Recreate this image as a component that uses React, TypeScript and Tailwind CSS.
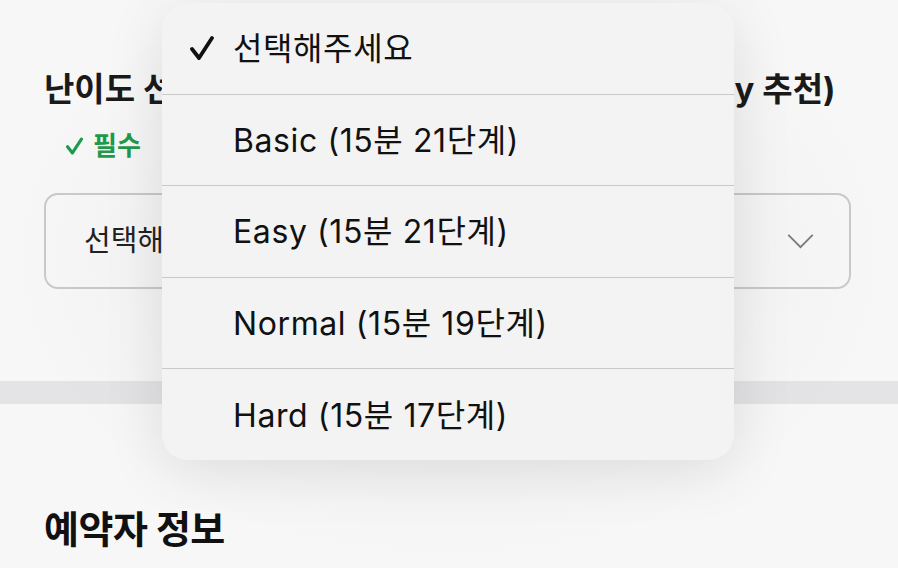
const options = [
  "선택해주세요",
  "Basic (15분 21단계)",
  "Easy (15분 21단계)",
  "Normal (15분 19단계)",
  "Hard (15분 17단계)",
];

function CheckMark({ className, weight = 3.6 }: { className?: string; weight?: number }) {
  return (
    <svg viewBox="0 0 24 26" className={className} fill="none">
      <polyline
        points="2,14 9,23 22,3"
        stroke="currentColor"
        strokeWidth={weight}
        strokeLinecap="round"
        strokeLinejoin="round"
      />
    </svg>
  );
}

export default function App() {
  return (
    <div
      className="relative h-[568px] w-[898px] overflow-hidden bg-[#f7f7f7] text-[#111]"
      style={{ fontFamily: "Inter, 'Noto Sans CJK KR', sans-serif" }}
    >
      <div className="flex flex-col pt-[69px]">
        <div className="pl-[44px] pr-[47px]">
          <h2 className="whitespace-nowrap text-[33px] font-bold leading-[40px] tracking-[0px] text-[#1a1a1a]">
            난이도 선택 (방탈출이 처음이라면 Basic 또는 Easy 추천)
          </h2>
          <div className="mt-[22px] flex items-center gap-[9px] pl-[21px] text-[26px] font-bold leading-[30px] text-[#1f9a4b]">
            <CheckMark className="h-[18px] w-[19px]" weight={4.5} />
            <span>필수</span>
          </div>
          <div className="mt-[32px] flex h-[96px] items-center justify-between rounded-[14px] border-2 border-[#cacaca] pl-[38px] pr-[35px]">
            <span className="text-[29px] text-[#222]">선택해주세요</span>
            <svg viewBox="0 0 28 16" className="h-[15px] w-[27px]" fill="none">
              <polyline points="1,1 14,14 27,1" stroke="#7b7b7b" strokeWidth="2" />
            </svg>
          </div>
        </div>
        <div className="mt-[92px] h-[23px] bg-[#e4e4e7]" />
        <div className="mt-[103px] px-[44px]">
          <h2 className="text-[38px] font-bold leading-[44px] tracking-[-0.5px] text-[#111]">예약자 정보</h2>
        </div>
      </div>

      <div className="pointer-events-none absolute inset-0 bg-[radial-gradient(ellipse_at_50%_45%,rgba(0,0,0,0.05),rgba(0,0,0,0)_70%)]" />

      <div className="absolute left-[162px] top-[3px] flex h-[457px] w-[572px] flex-col overflow-hidden rounded-[26px] bg-[#f3f3f3] shadow-[0_10px_60px_rgba(0,0,0,0.10)]">
        {options.map((label, i) => (
          <div
            key={label}
            className={`relative flex flex-1 items-center pl-[71px] pt-[2px] text-[32px] leading-none tracking-[0.6px] text-[#111] ${
              i < options.length - 1 ? "border-b border-[#c9c9c9]" : ""
            }`}
          >
            {i === 0 && (
              <CheckMark className="absolute left-[28px] top-1/2 h-[26px] w-[24px] -translate-y-1/2" weight={3.8} />
            )}
            <span>{label}</span>
          </div>
        ))}
      </div>
    </div>
  );
}
